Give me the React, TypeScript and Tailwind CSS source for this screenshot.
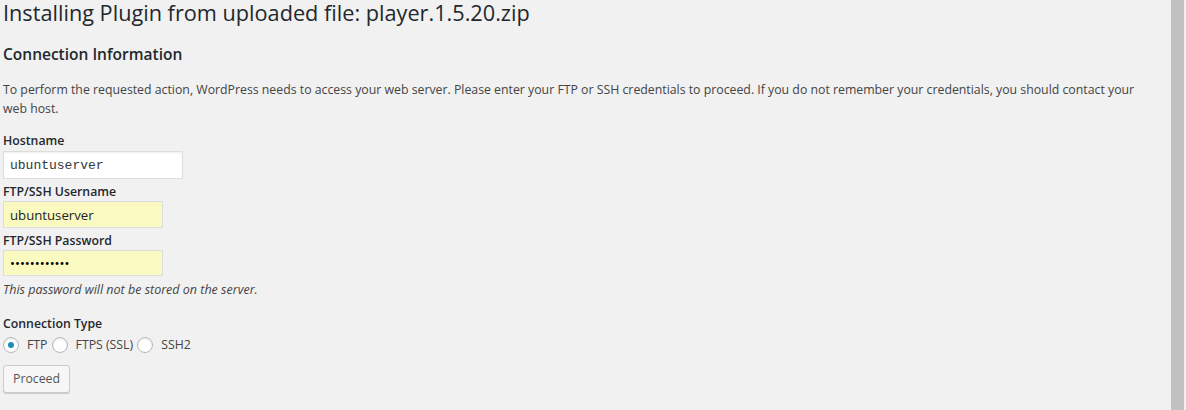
import React, { useState } from "react";

const font = { fontFamily: '"Open Sans", "Noto Sans", sans-serif' };

const App: React.FC = () => {
  const [type, setType] = useState("ftp");

  return (
    <div className="flex h-[410px] w-[1186px] overflow-hidden bg-[#f1f1f1]">
      <div className="flex-1 pl-[3px] text-[12.3px] text-[#444]" style={font}>
        <h1 className="text-[21.7px] font-normal leading-[25px] text-[#23282d]">
          Installing Plugin from uploaded file: player.1.5.20.zip
        </h1>

        <h2 className="mt-[19px] text-[15.5px] font-semibold leading-[20px] text-[#23282d]">
          Connection Information
        </h2>

        <p className="mt-[16px] pr-[30px] leading-[19px]">
          To perform the requested action, WordPress needs to access your web server. Please enter your FTP or SSH
          credentials to proceed. If you do not remember your credentials, you should contact your web host.
        </p>

        <div className="mt-[14px] flex flex-col">
          <label className="font-semibold leading-[18px] text-[#23282d]">Hostname</label>
          <input
            type="text"
            defaultValue="ubuntuserver"
            className="mt-[1px] h-[28px] w-[180px] border border-[#ddd] bg-white px-[6px] text-[13px] text-[#32373c] shadow-[inset_0_1px_2px_rgba(0,0,0,0.07)] outline-none"
            style={{ fontFamily: '"Liberation Mono", "DejaVu Sans Mono", monospace' }}
          />

          <label className="mt-[4px] font-semibold leading-[18px] text-[#23282d]">FTP/SSH Username</label>
          <input
            type="text"
            defaultValue="ubuntuserver"
            className="mt-0 h-[27px] w-[160px] border border-[#ddd] bg-[#fafac0] px-[6px] text-[13.2px] text-[#1d1d24] outline-none"
            style={font}
          />

          <label className="mt-[4px] font-semibold leading-[18px] text-[#23282d]">FTP/SSH Password</label>
          <input
            type="password"
            defaultValue="ubuntuserver"
            className="mt-0 h-[26px] w-[160px] border border-[#ddd] bg-[#fafac0] px-[6px] text-[13.2px] text-[#000] outline-none"
            style={font}
          />

          <p className="mt-[5px] text-[12.5px] italic leading-[18px]">This password will not be stored on the server.</p>
        </div>

        <div className="mt-[16px]">
          <div className="font-semibold leading-[18px] text-[#23282d]">Connection Type</div>
          <div className="mt-[3px] flex h-[18px] items-center">
            {[
              { id: "ftp", label: "FTP" },
              { id: "ftps", label: "FTPS (SSL)" },
              { id: "ssh", label: "SSH2" },
            ].map((o) => (
              <label key={o.id} className="flex cursor-pointer items-center" onClick={() => setType(o.id)}>
                <span className="flex h-[16px] w-[16px] items-center justify-center rounded-full border border-[#b4b9be] bg-white shadow-[inset_0_1px_2px_rgba(0,0,0,0.1)]">
                  {type === o.id && <span className="h-[6px] w-[6px] rounded-full bg-[#1e8cbe]" />}
                </span>
                <span className="ml-[8px] mr-[4px]">{o.label}</span>
              </label>
            ))}
          </div>
        </div>

        <button
          className="mt-[11px] h-[28px] rounded-[3px] border border-[#ccc] bg-[#f7f7f7] px-[9px] text-[12.3px] leading-[26px] text-[#555] shadow-[0_1px_0_#ccc]"
          style={font}
        >
          Proceed
        </button>
      </div>
      <div className="flex h-full w-[15px]">
        <div className="h-full w-[13px] bg-[#c1c1c1]" />
        <div className="h-full w-[2px] bg-[#f1f1f1]" />
      </div>
    </div>
  );
};

export default App;
